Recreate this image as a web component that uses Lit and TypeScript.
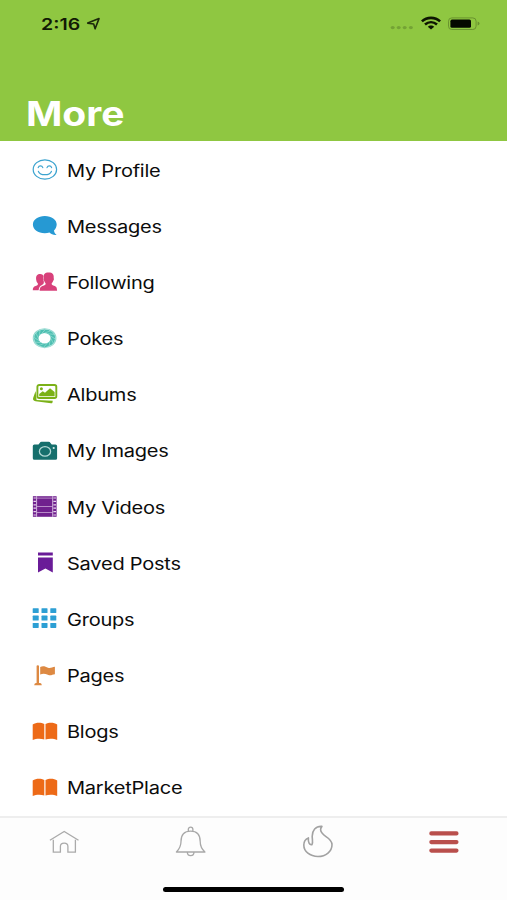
import { LitElement, html, svg, css } from "lit";
import { customElement } from "lit/decorators.js";

const pokeSpokes = Array.from({ length: 12 }, (_, i) => i * 30);
const gridCells = [0, 1, 2].flatMap((r) => [0, 1, 2].map((c) => [c, r]));
const filmHoles = [0, 1, 2, 3, 4, 5];

const book = svg`<path fill="#ed6a17" d="M.7 3.6C4 1.2 9 1.2 12.3 3.1V18.4C9 17.4 4 17.4.7 18.9Z"/>
  <path fill="#ed6a17" d="M13.5 3.1C16.8 1.2 22 1.2 25.2 3.6V18.9C22 17.4 16.8 17.4 13.5 18.4Z"/>`;

const items = [
  {
    label: "My Profile",
    icon: svg`<g fill="none" stroke="#3ba3cf" stroke-width="1.2" stroke-linecap="round">
      <ellipse cx="12.9" cy="10.5" rx="11.7" ry="9.7"/>
      <path d="M6.2 8.6C6.9 6.2 10 6.2 10.8 8.6M15 8.6C15.8 6.2 18.9 6.2 19.6 8.6M6.4 12.4C8.2 16.8 17.6 16.8 19.4 12.4"/></g>`,
  },
  {
    label: "Messages",
    icon: svg`<path fill="#2699d3" d="M12.8.9C19.6.9 24.7 4.6 24.7 9.3C24.7 11.8 23.6 14 22 15.6C22.2 17.6 23 18.8 24.6 19.9C21.5 20.2 19 19.1 17.5 17.5C16 18 14.5 18.2 12.8 18.2C6 18.2 .9 14.3 .9 9.4S6 .9 12.8.9Z"/>`,
  },
  {
    label: "Following",
    icon: svg`<g fill="#d8417b"><path d="M8.2 3C10 3 11 3.9 11.4 5C10.9 7 11 8.6 11.8 10.2C12 12.2 11.8 13 10 14C8 15 7 16 6.6 19.3H.8C.8 16.5 1.6 15.8 3.6 15C5.8 14.1 6 13.6 5.9 12.4C4.7 11.4 4.4 10 4.1 8.2C3.8 4.6 5.4 3 8.2 3Z"/>
      <path d="M16.6 1.4C20.6 1.4 22.1 3.4 21.7 7.2C22.2 7.8 21.9 9.3 21.2 9.8C20.9 11 20.3 11.8 19.7 12.3C19.6 13.8 19.9 14 22 14.8C24.4 15.7 25 16.5 25.1 19.8H7.6C7.8 16.5 8.8 15.7 11.2 14.8C13.4 14 13.7 13.8 13.6 12.3C13 11.8 12.4 11 12.1 9.8C11.4 9.3 11.1 7.8 11.6 7.2C11.1 3.4 12.8 1.4 16.6 1.4Z"/></g>`,
  },
  {
    label: "Pokes",
    icon: svg`<g transform="translate(12.6 10.2) scale(1.18 1)">
      <circle r="9.6" fill="none" stroke="#8fd8ce" stroke-width=".9"/>
      <circle r="7.1" fill="none" stroke="#4dbfb1" stroke-width="3.8"/>
      ${pokeSpokes.map((a) => svg`<path transform="rotate(${a})" d="M0-5.2L5.2-7.4" stroke="#9bddd4" stroke-width=".6"/>`)}</g>`,
  },
  {
    label: "Albums",
    icon: svg`<path fill="#7bb118" d="M3.6 7L4.6 16L20.8 16.7L20.4 18.7C20.2 19.3 19.6 19.4 19 19.3L3.6 17.2C1.4 16.7.6 15.6 1.2 13.8Z"/>
      <rect x="5.4" y="1" width="18.9" height="13" rx="1.8" fill="#fff" stroke="#7bb118" stroke-width="1.9"/>
      <circle cx="9.4" cy="4.8" r="1.5" fill="#7bb118"/>
      <path fill="#7bb118" d="M7.2 12.2V9.9L10.7 7.2L13 8.8L18 4.2L22.6 8V12.2Z"/>`,
  },
  {
    label: "My Images",
    icon: svg`<path fill="#166f6c" d="M.8 6Q.8 4.5 2.4 4.5H6.5L8.5 2.1Q8.8 1.7 9.6 1.7H16.6Q17.4 1.7 17.7 2.1L19.7 4.5H23.5Q25.1 4.5 25.1 6V18.2Q25.1 19.7 23.5 19.7H2.4Q.8 19.7.8 18.2Z"/>
      <ellipse cx="13" cy="11.4" rx="5.6" ry="4.7" fill="none" stroke="#b4d9d6" stroke-width="1.3"/>
      <ellipse cx="21.7" cy="8" rx="1.1" ry=".9" fill="#d5eae8"/>`,
  },
  {
    label: "My Videos",
    icon: svg`<path fill="#70218e" d="M.9.2H24.6V20.8H.9Z"/>
      <path d="M4.6.2V20.8M20.7.2V20.8" stroke="#dcc5e5" stroke-width=".9"/>
      <path d="M4.8 2.1H20.5M4.8 10.5H20.5M4.8 16.5H20.5" stroke="#c9a6d5" stroke-width=".8"/>
      ${filmHoles.map((i) => svg`<path d="M1.5 ${2 + i * 3.4}H3.9M21.4 ${2 + i * 3.4}H24" stroke="#e8d6ee" stroke-width="1.2"/>`)}`,
  },
  {
    label: "Saved Posts",
    icon: svg`<path fill="#6a1b98" d="M6 .4H20.8V3.4H6ZM6 5.6H20.8V20.4L13.4 16.4L6 20.4Z"/>`,
  },
  {
    label: "Groups",
    icon: svg`${gridCells.map(([c, r]) => svg`<rect x="${0.7 + c * 8.8}" y="${0.2 + r * 7.4}" width="6" height="4.9" rx=".6" fill="#2d9fd4"/>`)}`,
  },
  {
    label: "Pages",
    icon: svg`<path fill="#dd8942" d="M4.6 1.1Q4.6.3 5.8.3T7 1.1V18.1H8.2Q9.8 18.4 9.8 20.2H2.2Q2.2 18.4 3.9 18.1H4.6Z"/>
      <path fill="#dd8942" d="M8.2 2C11 .5 13.5 1.5 16 2.7C18.5 3.6 20 2.1 22.9 1.7V9.2C20 9.6 18.8 11 15.8 9.7C12.7 8.3 10.5 8.3 8.2 9.6Z"/>`,
  },
  { label: "Blogs", icon: book },
  { label: "MarketPlace", icon: book },
];

const tabs = [
  svg`<path d="M2.9 15.2L17.2 6.4L31.5 15.2M6.3 14.8V27.2H13.4V21.5C13.4 16.9 20.9 16.9 20.9 21.5V27.2H28.4V14.8" fill="none" stroke="#aaa" stroke-width="1.3"/>`,
  svg`<path d="M14.3 6.2V4.4C14.3 1.4 18.9 1.4 18.9 4.4V6.2M2.4 27C5.4 24 7 21 7 16.5C7 9.5 10.3 6.2 16.6 6.2S26.2 9.5 26.2 16.5C26.2 21 27.6 24 30.9 27ZM13.3 27C13.3 31.8 20 31.8 20 27" fill="none" stroke="#a8a8a8" stroke-width="1.3" stroke-linejoin="round"/>`,
  svg`<path d="M20.9 1.4C14.5 1 11.2 5.6 11.2 11.3C11.2 14.5 12.2 17.6 11 19.6C8.4 20.2 7 17.6 7.4 12.9C4.2 14.1 2.8 17.4 2.8 20C2.8 26.5 9 31.5 17 31.5S31 26.3 31 19.8C31 11.5 19.6 11.8 19.6 4.6C19.6 3.4 20.2 2.3 20.9 1.4Z" fill="none" stroke="#a2a2a2" stroke-width="1.6" stroke-linejoin="round"/>`,
  svg`<path d="M3.3 8.4H28.5M3.3 17.1H28.5M3.3 25.6H28.5" stroke="#b94f4c" stroke-width="4.1" stroke-linecap="round"/>`,
];

@customElement("app-root")
export class AppRoot extends LitElement {
  static styles = css`
    :host {
      display: flex;
      flex-direction: column;
      height: 900px;
      background: #fff;
      color: #0c0c0c;
      font-family: Inter, "Liberation Sans", sans-serif;
      overflow: hidden;
    }
    svg { display: block; flex: none; }
    header {
      box-sizing: border-box;
      height: 141px;
      flex: none;
      background: #8fc741;
      display: flex;
      flex-direction: column;
      justify-content: space-between;
      padding: 12px 27px 7px 25.5px;
    }
    .status { display: flex; align-items: center; height: 24px; padding-left: 15.5px; color: #111a04; }
    .time {
      width: 45px;
      font-size: 16px;
      font-weight: 600;
      line-height: 24px;
      white-space: nowrap;
      transform: scaleX(1.22);
      transform-origin: left;
    }
    .signals { margin-left: auto; }
    h1 {
      margin: 0;
      color: #fff;
      font-size: 33.5px;
      line-height: 40px;
      font-weight: 700;
      transform: scaleX(1.165);
      transform-origin: left;
    }
    ul { list-style: none; margin: 0; padding: 1px 0 0; flex: none; }
    li { display: flex; align-items: center; height: 56.18px; padding-left: 32px; gap: 8.5px; }
    .label {
      padding-top: 1px;
      font-size: 17px;
      letter-spacing: -0.2px;
      white-space: nowrap;
      transform: scaleX(1.178);
      transform-origin: left;
    }
    footer {
      flex: 1;
      display: flex;
      flex-direction: column;
      align-items: center;
      border-top: 2px solid #eee;
      background: #fdfdfd;
    }
    nav { display: grid; grid-template-columns: repeat(4, 1fr); width: 100%; justify-items: center; padding-top: 7px; }
    .indicator { width: 181px; height: 5px; margin-top: 29px; border-radius: 3px; background: #000; }
  `;

  render() {
    return html`
      <header>
        <div class="status">
          <span class="time">2:16</span>
          <svg width="15" height="14" viewBox="0 0 15 14"><path d="M1.7 6.1L13 1.6L9.1 11.8L7.7 7Z" fill="none" stroke="#1c290a" stroke-width="1.6" stroke-linejoin="round"/></svg>
          <svg class="signals" width="92" height="16" viewBox="0 0 92 16">
            <g fill="#74a335"><ellipse cx="4.7" cy="11.6" rx="2" ry="1.6"/><ellipse cx="10.7" cy="11.6" rx="2" ry="1.6"/><ellipse cx="16.7" cy="11.6" rx="2" ry="1.6"/><ellipse cx="22.9" cy="11.6" rx="2" ry="1.6"/></g>
            <path d="M33.9 5.4C38.9.7 47.1.7 52.1 5.4M37 8.6C40.6 5.5 45.4 5.5 49 8.6" fill="none" stroke="#0d1502" stroke-width="2.6"/>
            <path d="M39.8 10.8C41.5 9 44.5 9 46.2 10.8L43 13.4Z" fill="#0d1502"/>
            <rect x="60.5" y="1.9" width="27.6" height="11.6" rx="3.3" fill="none" stroke="#6a942f" stroke-width="1"/>
            <rect x="62.4" y="3.6" width="20.6" height="8.2" rx="1.6" fill="#050800"/>
            <path d="M89.6 5.6Q91.5 6.2 91.5 7.6T89.6 9.6Z" fill="#6a942f"/>
          </svg>
        </div>
        <h1>More</h1>
      </header>
      <ul>
        ${items.map(
          (i) => html`<li>
            <svg width="26" height="22" viewBox="0 0 26 22">${i.icon}</svg>
            <span class="label">${i.label}</span>
          </li>`
        )}
      </ul>
      <footer>
        <nav>${tabs.map((t) => html`<svg width="32" height="33" viewBox="0 0 32 33">${t}</svg>`)}</nav>
        <div class="indicator"></div>
      </footer>
    `;
  }
}
